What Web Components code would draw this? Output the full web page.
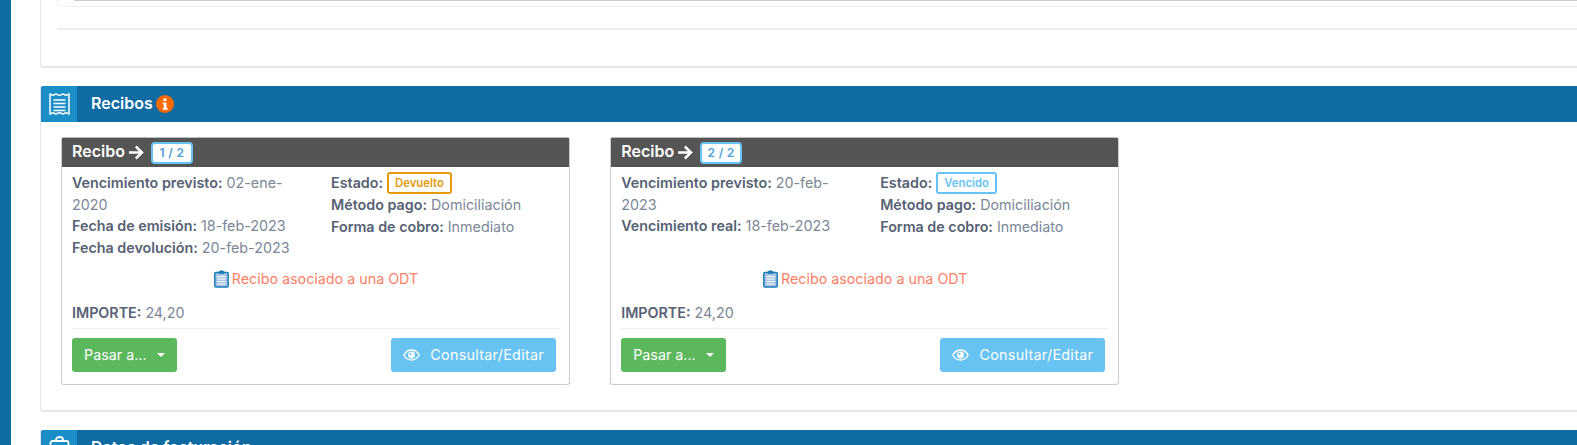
<!DOCTYPE html>
<html lang="es"><head><meta charset="utf-8"><title>Recibos</title>
<style>
html,body{margin:0;height:445px;overflow:hidden;background:#fff}
body{font-family:Inter,"Liberation Sans",sans-serif;font-size:14.3px;display:flex}
</style></head><body>
<template id="t-app"><style>
:host{display:flex;width:100%;height:445px;overflow:hidden}
.side{width:11px;background:#106ba3;flex:none}
.main{flex:1;min-width:0;padding-left:29px;display:flex;flex-direction:column}
::slotted(*){flex:none}
</style><div class="side"></div><div class="main"><slot></slot></div></template>

<template id="t-top"><style>
:host{display:block;height:66px;border-left:1px solid #e4e4ea;border-bottom:2px solid #e6e6ec;border-bottom-left-radius:3px;padding-left:16px;margin-bottom:18px}
.inner{height:6px;border-left:1px solid #eee;border-bottom:1px solid #eee;border-bottom-left-radius:4px;padding-left:16px}
.line{height:1px;background:#ccc}
hr{border:0;height:2px;background:#eee;margin:21px 0 0}
</style><div class="inner"><div class="line"></div></div><hr></template>

<template id="t-section"><style>
:host{display:block;border-left:1px solid #e4e4ea;border-bottom:2px solid #e6e6ec;border-bottom-left-radius:3px;margin-bottom:18px}
.head{height:36px;background:#106ba3;display:flex;align-items:center;color:#fff;font-weight:600;font-size:16px;border-radius:3px 0 0 0}
.ico{width:36px;height:36px;background:#1b8dc7;display:flex;align-items:center;justify-content:center;flex:none;margin-right:14px;border-radius:3px 0 0 0}
.title{padding-bottom:2px}
.tail{display:flex;align-items:center;margin-left:3px}
.body{display:flex;gap:40.2px;padding:15px 20px 25px 20px}
:host([clip]) .body{display:none}
</style><div class="head"><div class="ico"><slot name="icon"></slot></div><span class="title"><slot name="title"></slot></span><span class="tail"><slot name="tail"></slot></span></div><div class="body"><slot></slot></div></template>

<template id="t-card"><style>
:host{display:flex;flex-direction:column;width:509px;height:248px;box-sizing:border-box;border:1px solid #ccc;border-top:1px solid #bbb;border-radius:3px;color:#7b8797;line-height:21.6px;flex:none}
.bar{height:29px;background:#555;color:#fff;font-weight:600;font-size:16px;display:flex;align-items:center;padding-left:10px;flex:none}
.name{padding-bottom:2px}
.arrow{margin-left:3px;display:block}
.pg{margin-left:7px;width:42px;height:22px;box-sizing:border-box;border:2px solid #68c3f2;border-radius:4px;background:#fff;color:#4f9fdc;font-size:12px;font-weight:600;letter-spacing:.3px;display:flex;align-items:center;justify-content:center}
.cols{display:grid;grid-template-columns:239px 1fr;column-gap:20px;padding:5px 10px 0;height:98px;box-sizing:border-box;flex:none}
.odt{display:flex;align-items:center;justify-content:center;height:27px;color:#ff8066;padding-left:1px;flex:none}
.odt svg{margin-right:3px}
.imp{margin:0 10px;padding:10px 0 4px;flex:none;border-bottom:1px solid #eee}
.acts{display:flex;justify-content:space-between;padding:9px 13px 0 10px}
</style><div class="bar"><span class="name"><slot name="title"></slot></span><svg class="arrow" width="16" height="15" viewBox="0 0 16 15"><path d="M1 7.500h13M7.800 1.500l6.200 6-6.200 6" fill="none" stroke="#fff" stroke-width="2.500"/></svg><span class="pg"><slot name="page"></slot></span></div>
<div class="cols"><div><slot name="left"></slot></div><div><slot name="right"></slot></div></div>
<div class="odt"><svg width="15" height="19" viewBox="0 0 15 19"><path d="M1.800 3.500h11.400a1 1 0 0 1 1 1V17a1 1 0 0 1-1 1H1.800a1 1 0 0 1-1-1V4.500a1 1 0 0 1 1-1z" fill="#a8c4e4" stroke="#1b7db8" stroke-width="1.500"/><path d="M5 3.500V2.500h1.500a1 1 0 0 1 2 0H10v1.800H5z" fill="#1b7db8" stroke="#1b7db8"/><path d="M3.500 7.500h8M3.500 10h8M3.500 12.500h8M3.500 15h8" stroke="#fff" stroke-width="1"/></svg><span><slot name="odt"></slot></span></div>
<div class="imp"><slot name="amount"></slot></div>
<div class="acts"><slot name="actions"></slot></div></template>

<template id="t-item"><style>
:host{display:block}
b{font-weight:600;color:#566173}
</style><b><slot name="k"></slot></b> <slot></slot></template>

<template id="t-badge"><style>
:host{display:inline-block;box-sizing:border-box;height:22px;line-height:18px;border:2px solid var(--c);border-radius:3px;color:var(--c);font-size:11.3px;font-weight:600;padding:0 6px;vertical-align:top;background:#fff}
</style><slot></slot></template>

<template id="t-btn"><style>
:host{display:inline-flex;align-items:center;height:34px;box-sizing:border-box;border-radius:3px;background:var(--bg);color:#fff;padding:0 12px;font-size:14.3px;letter-spacing:var(--ls,0)}
</style><slot></slot></template>

<x-app>
<x-top></x-top>
<x-section>
 <svg slot="icon" width="21" height="24" viewBox="0 0 21 24"><path d="M1 2c1.500 0 1.500 1.200 3 1.200S5.500 2 7 2s1.500 1.200 3.500 1.200S12.500 2 14 2s1.500 1.200 3 1.200S18.500 2 20 2v20c-1.500 0-1.500-1.200-3-1.200S15.500 22 14 22s-1.500-1.200-3.500-1.200S8.500 22 7 22s-1.500-1.200-3-1.200S2.500 22 1 22z" fill="none" stroke="#fff" stroke-width="1.500"/><path d="M4.500 8h12M4.500 11.500h12M4.500 15h12M4.500 18.500h12" stroke="#fff" stroke-width="1.400"/></svg>
 <span slot="title">Recibos</span>
 <svg slot="tail" width="18" height="18" viewBox="0 0 18 18"><circle cx="9" cy="9" r="9" fill="#f96a00"/><path d="M7.500 3.500h3v2.500h-3zM6.800 7.500h3.700v5.200h1.100v2H6.800v-2h1v-3.200h-1z" fill="#fff"/></svg>
 <x-card>
  <span slot="title">Recibo</span><span slot="page">1 / 2</span>
  <x-item slot="left"><span slot="k">Vencimiento previsto:</span> 02-ene-2020</x-item>
  <x-item slot="left"><span slot="k">Fecha de emisión:</span> 18-feb-2023</x-item>
  <x-item slot="left"><span slot="k">Fecha devolución:</span> 20-feb-2023</x-item>
  <x-item slot="right"><span slot="k">Estado:</span> <x-badge style="--c:#e39a0e">Devuelto</x-badge></x-item>
  <x-item slot="right"><span slot="k">Método pago:</span> Domiciliación</x-item>
  <x-item slot="right"><span slot="k">Forma de cobro:</span> Inmediato</x-item>
  <span slot="odt">Recibo asociado a una ODT</span>
  <x-item slot="amount"><span slot="k">IMPORTE:</span> 24,20</x-item>
  <x-btn slot="actions" style="--bg:#5cb85c">Pasar a...<svg width="8" height="4" viewBox="0 0 8 4" style="margin-left:10px"><path d="M0 0h8L4 4z" fill="#fff"/></svg></x-btn>
  <x-btn slot="actions" style="--bg:#68c3f2;--ls:.3px"><svg width="17" height="12" viewBox="0 0 17 12" style="margin-right:10px"><path d="M.8 6C2.500 3 5 1 8.500 1s6 2 7.700 5c-1.700 3-4.200 5-7.700 5S2.500 9 .8 6z" fill="none" stroke="#fff" stroke-width="1.300"/><circle cx="8.500" cy="6" r="3.400" fill="#fff"/><circle cx="7.400" cy="4.900" r="1.100" fill="#68c3f2"/></svg>Consultar/Editar</x-btn>
 </x-card>
 <x-card>
  <span slot="title">Recibo</span><span slot="page">2 / 2</span>
  <x-item slot="left"><span slot="k">Vencimiento previsto:</span> 20-feb-2023</x-item>
  <x-item slot="left"><span slot="k">Vencimiento real:</span> 18-feb-2023</x-item>
  <x-item slot="right"><span slot="k">Estado:</span> <x-badge style="--c:#68c3f2">Vencido</x-badge></x-item>
  <x-item slot="right"><span slot="k">Método pago:</span> Domiciliación</x-item>
  <x-item slot="right"><span slot="k">Forma de cobro:</span> Inmediato</x-item>
  <span slot="odt">Recibo asociado a una ODT</span>
  <x-item slot="amount"><span slot="k">IMPORTE:</span> 24,20</x-item>
  <x-btn slot="actions" style="--bg:#5cb85c">Pasar a...<svg width="8" height="4" viewBox="0 0 8 4" style="margin-left:10px"><path d="M0 0h8L4 4z" fill="#fff"/></svg></x-btn>
  <x-btn slot="actions" style="--bg:#68c3f2;--ls:.3px"><svg width="17" height="12" viewBox="0 0 17 12" style="margin-right:10px"><path d="M.8 6C2.500 3 5 1 8.500 1s6 2 7.700 5c-1.700 3-4.200 5-7.700 5S2.500 9 .8 6z" fill="none" stroke="#fff" stroke-width="1.300"/><circle cx="8.500" cy="6" r="3.400" fill="#fff"/><circle cx="7.400" cy="4.900" r="1.100" fill="#68c3f2"/></svg>Consultar/Editar</x-btn>
 </x-card>
</x-section>
<x-section clip>
 <svg slot="icon" width="21" height="24" viewBox="0 0 21 24"><rect x="1.500" y="5" width="18" height="18" rx="2" fill="none" stroke="#fff" stroke-width="1.800"/><path d="M7 5V3.800a3.500 2.800 0 0 1 7 0V5" fill="none" stroke="#fff" stroke-width="1.800"/><path d="M10.500 10v6M7.500 13h6" stroke="#fff" stroke-width="1.800"/></svg>
 <span slot="title">Datos de facturación</span>
</x-section>
</x-app>
<script>
function def(tag,id){customElements.define(tag,class extends HTMLElement{constructor(){super();this.attachShadow({mode:'open'}).appendChild(document.getElementById(id).content.cloneNode(true));}});}
[['x-app','t-app'],['x-top','t-top'],['x-section','t-section'],['x-card','t-card'],['x-item','t-item'],['x-badge','t-badge'],['x-btn','t-btn']].forEach(a=>def(a[0],a[1]));
</script>
</body></html>
